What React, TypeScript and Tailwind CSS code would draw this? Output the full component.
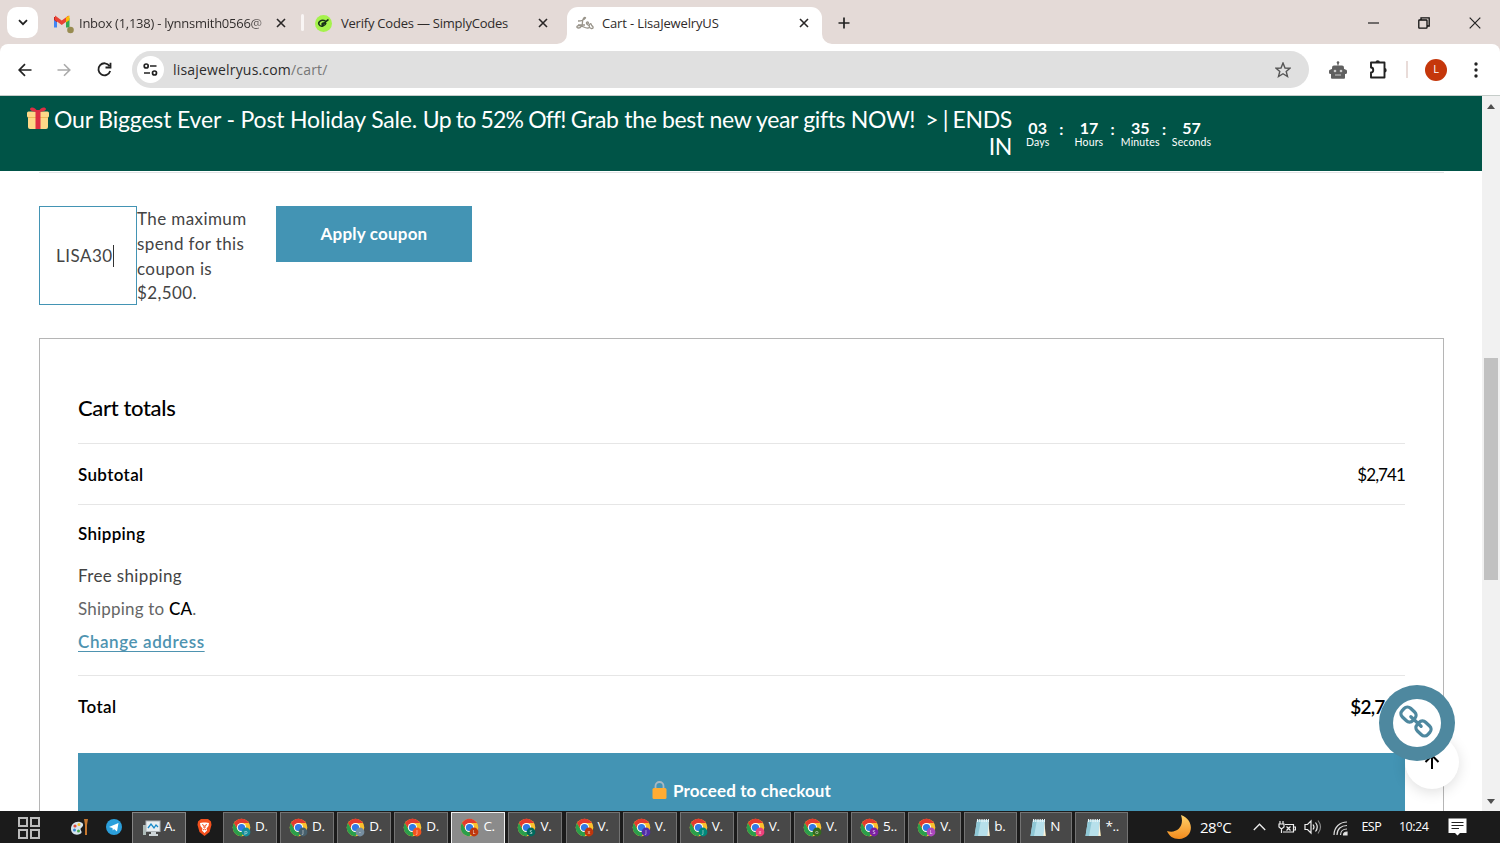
import type { ReactNode } from 'react';
import clsx from 'clsx';

type Task = { label: string; kind: 'chrome' | 'note'; badge?: string; letter?: string; active?: boolean; width: string };

const tasks: Task[] = [
    { label: 'D.', kind: 'chrome', badge: '#148c99', letter: 'p', width: 'w-[54px]' },
    { label: 'D.', kind: 'chrome', badge: '#47606d', letter: 'J', width: 'w-[54px]' },
    { label: 'D.', kind: 'chrome', badge: '#758da0', letter: '-', width: 'w-[54px]' },
    { label: 'D.', kind: 'chrome', badge: '#f4511e', letter: 'J', width: 'w-[54px]' },
    { label: 'C.', kind: 'chrome', badge: '#bf360c', letter: 'L', active: true, width: 'w-[54px]' },
    { label: 'V.', kind: 'chrome', badge: '#00695c', letter: 'S', width: 'w-[54px]' },
    { label: 'V.', kind: 'chrome', badge: '#bf360c', letter: 'x', width: 'w-[54px]' },
    { label: 'V.', kind: 'chrome', badge: '#512da8', letter: 'J', width: 'w-[54px]' },
    { label: 'V.', kind: 'chrome', badge: '#00897b', letter: 'J', width: 'w-[54px]' },
    { label: 'V.', kind: 'chrome', badge: '#ec407a', letter: 'x', width: 'w-[54px]' },
    { label: 'V.', kind: 'chrome', badge: '#33691e', letter: 'o', width: 'w-[54px]' },
    { label: '5..', kind: 'chrome', badge: '#7b1fa2', letter: 'S', width: 'w-[54px]' },
    { label: 'V.', kind: 'chrome', badge: '#ab47bc', letter: 'L', width: 'w-[53px]' },
    { label: 'b.', kind: 'note', width: 'w-[53px]' },
    { label: 'N', kind: 'note', width: 'w-[52px]' },
    { label: '*..', kind: 'note', width: 'w-[53px]' },
];

const countdown = [
    { value: '03', unit: 'Days' },
    { value: '17', unit: 'Hours' },
    { value: '35', unit: 'Minutes' },
    { value: '57', unit: 'Seconds' },
];

function ChromeIcon({ badge, letter }: { badge?: string; letter?: string }) {
    return (
        <svg width="20" height="20" viewBox="0 0 20 20" className="shrink-0">
            <circle cx="9.500" cy="9.5" r="8.8" fill="#fbc02d" />
            <path d="M1.9 5.1A8.8 8.8 0 0 1 17.1 5.1H9.5A4.4 4.4 0 0 0 5.7 11.7Z" fill="#e33b2e" />
            <path d="M1.9 5.1L5.7 11.7A4.4 4.4 0 0 0 13.3 11.7L9.5 18.3A8.8 8.8 0 0 1 1.9 5.1Z" fill="#2b9e4b" />
            <circle cx="9.5" cy="9.5" r="4.6" fill="#fff" />
            <circle cx="9.5" cy="9.5" r="3.6" fill="#3079e6" />
            <circle cx="14" cy="14" r="4.400" fill={badge} />
            <text x="14" y="16" fontSize="5.5" fill="#fff" textAnchor="middle" fontFamily="Open Sans" opacity=".8">{letter}</text>
        </svg>
    );
}

function NoteIcon() {
    return (
        <svg width="18" height="20" viewBox="0 0 18 20" className="shrink-0">
            <path d="M15 3L17 18H4Z" fill="#e8d9ab" />
            <path d="M4 2H16L14.5 18H1.5Z" fill="#b7e0eb" />
            <path d="M4 2H8L5 18H1.5Z" fill="#8fc7d5" />
            <path d="M14.5 18L16 2V17.5Z" fill="#f7f4e6" />
            <path d="M4 2.5H16" stroke="#e8f5f8" strokeWidth="3" strokeDasharray="1.2 1" />
        </svg>
    );
}

function CloseIcon() {
    return (
        <svg width="10" height="10" viewBox="0 0 10 10" className="shrink-0">
            <path d="M1 1L9 9M9 1L1 9" stroke="#2a2727" strokeWidth="1.6" />
        </svg>
    );
}

function TabStrip() {
    return (
        <div className="flex h-11 items-stretch bg-[#e4dad7] text-[13px] text-[#2f2b2a]">
            <div className="ml-[7px] mt-[7px] flex size-[31px] shrink-0 items-center justify-center rounded-[10px] bg-white">
                <svg width="10" height="7" viewBox="0 0 10 7"><path d="M1 1.2L5 5.2L9 1.2" fill="none" stroke="#222" strokeWidth="1.8" /></svg>
            </div>
            <div className="ml-[15px] flex h-[46px] w-[248px] items-center">
                <svg width="22" height="20" viewBox="0 0 22 20" className="mt-0.5 shrink-0">
                    <path d="M1 4V13.5H4V7Z" fill="#4285f4" />
                    <path d="M13 7V13.5H16.500V4Z" fill="#34a853" />
                    <path d="M1 3V6L4 8.300V3Z" fill="#c5221f" />
                    <path d="M2 1.500L8.750 6.500L15.500 1.500V6L8.750 11L2 6Z" fill="#ea4335" />
                    <path d="M13 3.500L16.500 1.500V6L13 8.500Z" fill="#fbbc04" />
                    <circle cx="17.500" cy="16" r="3.300" fill="#988c51" />
                </svg>
                <span className="ml-[4px] mt-px w-[189px] overflow-hidden whitespace-nowrap bg-gradient-to-r from-[#2f2b2a] from-90% to-[#2f2b2a]/30 bg-clip-text tracking-[-0.25px] text-transparent">Inbox (1,138) - lynnsmith0566@</span>
                <span className="ml-[8px]"><CloseIcon /></span>
            </div>
            <div className="mt-[14px] h-[17px] w-[3px] rounded bg-[#f9f5f4]" />
            <div className="ml-[11px] flex h-[46px] w-[242px] items-center">
                <svg width="17" height="17" viewBox="0 0 17 17" className="shrink-0">
                    <circle cx="8.500" cy="8.500" r="8.500" fill="#a5f24c" />
                    <path d="M10.500 6C6 4 2.800 7 4 9.500C5.500 12.500 10.500 11 11 8M11 8C8 7.500 6.500 8.500 7.200 9.700C9 10 10 6.500 13.500 4.500" fill="none" stroke="#183018" strokeWidth="1.500" />
                </svg>
                <span className="ml-[9px] mt-px w-[197px] whitespace-nowrap tracking-[-0.22px]">Verify Codes — SimplyCodes</span>
                <span><CloseIcon /></span>
            </div>
            <div className="relative ml-[10px] mt-[7px] flex w-[255px] rounded-t-[11px] bg-white">
                <svg width="10" height="10" viewBox="0 0 10 10" className="absolute bottom-0 -left-[10px]"><path d="M10 0V10H0A10 10 0 0 0 10 0Z" fill="#fff" /></svg>
                <svg width="10" height="10" viewBox="0 0 10 10" className="absolute bottom-0 -right-[10px]"><path d="M0 0V10H10A10 10 0 0 1 0 0Z" fill="#fff" /></svg>
                <div className="ml-[9px] flex h-8 items-center">
                    <svg width="18" height="14" viewBox="0 0 18 14" fill="none" stroke="#99948a" strokeWidth="1.300">
                        <path d="M2 5C5 5 8 4 9.500 1.800C9 .5 6.500 2 6.500 6C6.500 9 5 12 2.500 12C0 12 .5 9.500 3 9.500C6 9.500 9 12.500 12 12C14 12 14 10 12 9C10 8 10 6 11.500 6C13 6 12.500 8 11 8.500M13 10C14 7 15 7 15.500 9C16 10.500 17.500 10 17 12C16 13 14.500 12.500 14 11.500M2 9H9" />
                    </svg>
                    <span className="ml-[8px] mt-px w-[197px] whitespace-nowrap tracking-[-0.15px]">Cart - LisaJewelryUS</span>
                    <CloseIcon />
                </div>
            </div>
            <svg width="12" height="12" viewBox="0 0 12 12" className="ml-[16px] mt-[17px]"><path d="M6 .5V11.500M.5 6H11.500" stroke="#222" strokeWidth="1.700" /></svg>
            <div className="ml-auto flex h-[45px] items-center gap-[39px] pr-[19px]">
                <svg width="11" height="11" viewBox="0 0 11 11"><path d="M0 6H11" stroke="#222" strokeWidth="1.200" /></svg>
                <svg width="12" height="12" viewBox="0 0 12 12" fill="none" stroke="#111" strokeWidth="1.300"><rect x=".8" y="3" width="8.200" height="8.200" rx=".6" /><path d="M3 3V.8H11.200V9H9" /></svg>
                <svg width="12" height="12" viewBox="0 0 12 12"><path d="M.7.7L11.300 11.300M11.300.7L.7 11.300" stroke="#222" strokeWidth="1.200" /></svg>
            </div>
        </div>
    );
}

function Toolbar() {
    return (
        <div className="bg-[#e4dad7]">
            <div className="flex h-[52px] items-center rounded-t-[8px] border-b border-[#c6cdca] bg-white">
                <svg width="14" height="14" viewBox="0 0 14 14" className="ml-[18px]" fill="none" stroke="#222" strokeWidth="1.700"><path d="M13.500 7H1.500M7 1.200L1.200 7L7 12.800" /></svg>
                <svg width="14" height="14" viewBox="0 0 14 14" className="ml-[25px]" fill="none" stroke="#aaa" strokeWidth="1.600"><path d="M.5 7H12.500M7 1.200L12.800 7L7 12.800" /></svg>
                <svg width="15" height="15" viewBox="0 0 15 15" className="ml-[25.500px]" fill="none" stroke="#222" strokeWidth="1.800"><path d="M12.500 4A6 6 0 1 0 13.200 9M13.500.8V5.500H8.500" /></svg>
                <div className="ml-[20.500px] flex h-[37px] w-[1177px] shrink-0 items-center rounded-full bg-[#e0e0e0] pl-[5px] pr-[18px]">
                    <div className="flex size-[27px] items-center justify-center rounded-full bg-white">
                        <svg width="15" height="13" viewBox="0 0 15 13" fill="none" stroke="#222" strokeWidth="1.700"><circle cx="3.200" cy="3" r="2" /><path d="M7 3H13.500M1 10H7" /><circle cx="11.500" cy="10" r="2" /></svg>
                    </div>
                    <span className="ml-[9px] text-[14px] tracking-[0.18px] text-[#2c2c2c]">lisajewelryus.com<span className="text-[#777]">/cart/</span></span>
                    <svg width="16" height="16" viewBox="0 0 16 16" className="ml-auto" fill="none" stroke="#555" strokeWidth="1.400"><path d="M8 1L10 6L15 6.200L11.200 9.500L12.500 14.500L8 11.700L3.500 14.500L4.800 9.500L1 6.200L6 6Z" /></svg>
                </div>
                <svg width="18" height="18" viewBox="0 0 18 18" className="ml-5" fill="#606060">
                    <circle cx="9" cy="1.600" r="1.300" />
                    <path d="M8.400 2H9.600V4.500H8.400Z" />
                    <rect x="3" y="4.500" width="12" height="6" rx="2" />
                    <rect x="0" y="8.500" width="18" height="4.500" rx="1.500" />
                    <rect x="2" y="8" width="14" height="9.800" rx="1" />
                    <circle cx="6" cy="10" r="1.300" fill="#ccc" />
                    <circle cx="12" cy="10" r="1.300" fill="#ccc" />
                    <path d="M6 14H12" stroke="#ccc" />
                </svg>
                <svg width="19" height="19" viewBox="0 0 19 19" className="ml-[22px]">
                    <path d="M2 2.500H15.500V17.500H2V12.500C5 12.500 5 7.500 2 7.500Z" fill="none" stroke="#222" strokeWidth="1.900" strokeLinejoin="round" />
                    <path d="M6.500 2.500A2.200 2.200 0 0 1 10.900 2.500ZM15.500 8A2.200 2.200 0 0 1 15.500 12.400Z" fill="#222" />
                </svg>
                <div className="ml-[18px] h-[17px] w-[2px] bg-[#e9dcd9]" />
                <div className="ml-[17px] flex size-[22px] items-center justify-center rounded-full bg-[#c5370b] text-[11px] text-white">L</div>
                <svg width="4" height="16" viewBox="0 0 4 16" className="ml-[27px]" fill="#222"><circle cx="2" cy="2" r="1.700" /><circle cx="2" cy="8" r="1.700" /><circle cx="2" cy="14" r="1.700" /></svg>
            </div>
        </div>
    );
}

function Banner() {
    return (
        <div className="flex h-[75px] shrink-0 bg-[#005447] text-white">
            <div className="ml-[26px] mt-[10px] w-[986px] whitespace-nowrap text-right text-[23px] leading-[26px] tracking-[-0.33px]">
                <div className="flex items-center justify-between">
                    <svg width="24" height="24" viewBox="0 0 24 24" className="shrink-0">
                        <path d="M2 9H22V20Q22 22 20 22H4Q2 22 2 20Z" fill="#fdd888" />
                        <rect x="1" y="4.500" width="22" height="6" rx="1.500" fill="#fdd888" />
                        <path d="M2 10.500H22" stroke="#eeb85b" />
                        <path d="M9.500 3H14.500V22H9.500Z" fill="#dd2e44" />
                        <path d="M12 5C8 5 4 4 4 2C5-.5 9 0 12 5C15 0 19-.5 20 2C20 4 16 5 12 5Z" fill="#dd2e44" />
                    </svg>
                    <span>
                        <span className="tracking-[-0.16px]">Our Biggest Ever - Post Holiday Sale. </span>
                        <span className="tracking-[-0.8px]">Up to 52% Off! </span>
                        Grab the best new year gifts NOW!<span className="tracking-[-0.9px]"> &nbsp;&gt; | </span>ENDS
                    </span>
                </div>
                <div className="mt-px">IN</div>
            </div>
            <div className="mt-[22px] flex">
                {countdown.map((c, i) => (
                    <div key={c.unit} className="flex">
                        {i > 0 && <span className="w-0 -translate-x-[4px] text-[16px] font-bold leading-[22px]">:</span>}
                        <div className="flex w-[51.300px] flex-col items-center">
                            <span className="text-[16px] font-bold leading-[20px]">{c.value}</span>
                            <span className="-mt-[2px] text-[10.500px] leading-[12px] tracking-[0.15px]">{c.unit}</span>
                        </div>
                    </div>
                ))}
            </div>
        </div>
    );
}

function Row({ children, className }: { children: ReactNode; className: string }) {
    return <div className={clsx('flex items-center justify-between border-t border-[#e6e6e6]', className)}>{children}</div>;
}

function CartTotals() {
    return (
        <div className="mx-[39px] mr-[38px] mt-[32px] h-[480px] shrink-0 border border-[#b5b5b5] px-[38px] text-[17px] text-black">
            <h2 className="flex h-[104px] items-end pb-[21px] text-[22px] font-medium leading-[28px] tracking-[-0.35px]">Cart totals</h2>
            <Row className="h-[61px] pt-[2px]">
                <span className="font-semibold tracking-[0.35px]">Subtotal</span>
                <span className="tracking-[-0.9px]">$2,741</span>
            </Row>
            <div className="h-[171px] border-t border-[#e6e6e6] pt-[16px]">
                <div className="font-semibold leading-[26px] tracking-[0.3px]">Shipping</div>
                <div className="mt-[12px] leading-[33px] tracking-[0.35px] text-[#444]">
                    <div>Free shipping</div>
                    <div className="tracking-[0.2px] text-[#666]">Shipping to <span className="font-medium text-black">CA</span>.</div>
                    <div><span className="font-semibold tracking-[0.58px] text-[#4e93b0] underline underline-offset-3">Change address</span></div>
                </div>
            </div>
            <Row className="h-[78px] pb-[15px]">
                <span className="font-semibold tracking-[0.4px]">Total</span>
                <span className="text-[19px] font-semibold tracking-[-0.8px]">$2,741</span>
            </Row>
            <button className="flex h-[76px] w-full items-center justify-center gap-[6px] bg-[#4394b4] pb-px font-bold tracking-[0.12px] text-white">
                <svg width="15" height="19" viewBox="0 0 15 19"><path d="M3.500 8V5A4 4 0 0 1 11.500 5V8" fill="none" stroke="#aab8c2" strokeWidth="1.800" /><rect x=".5" y="7" width="14" height="11" rx="1.500" fill="#ffac33" /></svg>
                Proceed to checkout
            </button>
        </div>
    );
}

function FloatingButtons() {
    return (
        <>
            <div className="absolute left-[1405px] top-[639px] flex size-[54px] items-center justify-center rounded-full bg-white shadow-[0_3px_14px_rgba(0,0,0,0.13)]">
                <svg width="16" height="18" viewBox="0 0 16 18" fill="none" stroke="#000" strokeWidth="2"><path d="M8 16V3M1.500 9L8 2.500L14.500 9" /></svg>
            </div>
            <div className="absolute left-[1379px] top-[589px] flex size-[76px] items-center justify-center rounded-full bg-[#4e889f]">
                <div className="flex size-12 items-center justify-center rounded-full bg-white">
                    <svg width="36" height="36" viewBox="-18 -18 36 36" fill="none" stroke="#4e889f" strokeWidth="3.300">
                        <g transform="translate(-1 -1.500) rotate(43)">
                            <rect x="-17.500" y="-6" width="14.500" height="12" rx="4.500" />
                            <rect x="3" y="-6" width="14.500" height="12" rx="4.500" />
                            <path d="M-7 0H7" strokeLinecap="round" />
                        </g>
                    </svg>
                </div>
            </div>
        </>
    );
}

function Scrollbar() {
    return (
        <div className="flex w-[18px] shrink-0 flex-col items-center bg-[#f1f1f1]">
            <svg width="8" height="5" viewBox="0 0 8 5" className="mt-[8px]"><path d="M0 5L4 0L8 5Z" fill="#505050" /></svg>
            <div className="mt-[249px] h-[222px] w-[14px] bg-[#c1c1c1]" />
            <svg width="8" height="5" viewBox="0 0 8 5" className="mb-[7px] mt-auto"><path d="M0 0L4 5L8 0Z" fill="#505050" /></svg>
        </div>
    );
}

function Taskbar() {
    return (
        <div className="flex h-8 items-center bg-[#1b1b1b] text-[14px] text-white">
            <svg width="22" height="22" viewBox="0 0 22 22" className="ml-[18px] mt-[2px] shrink-0" fill="none" stroke="#bcbcbc" strokeWidth="2"><path d="M1 1H9V9H1ZM13 1H21V9H13ZM1 13H9V21H1ZM13 13H21V21H13Z" /></svg>
            <svg width="18" height="18" viewBox="0 0 18 18" className="ml-[31px] shrink-0">
                <path d="M0 11C0 6 4 3 9 4C13 5 13 8 10 10C8 12 13 14 9 16C4 18 0 15 0 11Z" fill="#d7e5ee" />
                <circle cx="4" cy="8" r="1.600" fill="#e24b3b" /><circle cx="8" cy="6.500" r="1.500" fill="#f4bf32" /><circle cx="3.500" cy="12" r="1.500" fill="#3b88d3" /><circle cx="7.500" cy="13" r="1.500" fill="#48a84b" />
                <path d="M13 1H17L16 7V17H14V7Z" fill="#c8782f" />
            </svg>
            <svg width="16" height="16" viewBox="0 0 16 16" className="ml-[17px] shrink-0"><circle cx="8" cy="8" r="8" fill="#2b9fdb" /><path d="M3 8L12.500 4L11 12.500L8 10L6.800 11.500L6.500 9Z" fill="#fff" /></svg>
            <div className="ml-[10px] mt-px flex h-[31px] w-[54px] shrink-0 items-center border border-b-0 border-[#858585] bg-[#484848] pl-[9px]">
                <svg width="19" height="17" viewBox="0 0 19 17" className="shrink-0"><path d="M1 5H4V15H1Z" fill="#aebbb8" /><rect x="4" y="1" width="14" height="10.500" fill="#e9eef1" stroke="#aeb4b8" /><path d="M6 8L9 4L12 8L14 5L16 7" stroke="#1688c7" fill="none" strokeWidth="1.300" /><path d="M9 12H14V14H16V16H7V14H9Z" fill="#ccd4d7" /></svg>
                <span className="-mt-[3px] ml-[3px] text-[13.500px] tracking-[-0.3px]">A.</span>
            </div>
            <svg width="15" height="17" viewBox="0 0 15 17" className="ml-[11px] shrink-0"><path d="M4 0H11L14 2.500L14.500 6L12.500 13L7.500 17L2.500 13L.5 6L1 2.500Z" fill="#f4511e" /><path d="M3 4L6 3.500H9L12 4L11.500 7L9.500 9.500L10 11.500L7.500 14L5 11.500L5.500 9.500L3.500 7Z" fill="#fff" /><path d="M5 5.500L7 6.500V9M10 5.500L8 6.500V9M6 11L7.500 10L9 11" stroke="#f4511e" fill="none" /></svg>
            <div className="ml-[11px] mt-px flex shrink-0 gap-[3.100px]">
                {tasks.map((t, i) => (
                    <div key={i} className={clsx('flex h-[31px] shrink-0 items-center border border-b-0 pl-[8px]', t.width, t.active ? 'border-[#eee] bg-[#8b8b8b]' : 'border-[#737373] bg-[#484848]')}>
                        {t.kind === 'chrome' ? <ChromeIcon badge={t.badge} letter={t.letter} /> : <NoteIcon />}
                        <span className="-mt-[3px] ml-[3px] text-[13.500px] tracking-[-0.3px]">{t.label}</span>
                    </div>
                ))}
            </div>
            <svg width="26" height="26" viewBox="0 0 26 26" className="ml-[37.500px] shrink-0"><defs><linearGradient id="moon" x2="0" y2="1"><stop stopColor="#ffd36b" /><stop offset="1" stopColor="#f38a1c" /></linearGradient></defs><path d="M15 1C29 6 28 24 13 25C7 25 3 22 1 17C10 20 19 13 15 1Z" fill="url(#moon)" /></svg>
            <span className="ml-[8px] w-[34px] whitespace-nowrap text-[15px] tracking-[-0.4px]">28°C</span>
            <svg width="13" height="8" viewBox="0 0 13 8" className="ml-[19.500px] shrink-0" fill="none" stroke="#eee" strokeWidth="1.300"><path d="M.8 7L6.500 1.200L12.200 7" /></svg>
            <svg width="18" height="13" viewBox="0 0 18 13" className="ml-[11.500px] shrink-0" fill="none" stroke="#eee" strokeWidth="1.200"><path d="M1 3H6V6L3.500 8L1 6ZM2 0V3M5 0V3M3.500 8V12M7 3.500H15.500V11H5M16 6H17.500V9H16M8.500 5.500L12.500 9.500M12.500 5.500L8.500 9.500" /></svg>
            <svg width="18" height="16" viewBox="0 0 18 16" className="ml-[8px] shrink-0" fill="none" stroke="#eee" strokeWidth="1.200"><path d="M1 5.500H3.500L7 2V14L3.500 10.500H1ZM9 5.500Q11 8 9 10.500M11.500 3.500Q15 8 11.500 12.500" /><path d="M14 1.500Q19 8 14 14.500" stroke="#888" /></svg>
            <svg width="16" height="15" viewBox="0 0 16 15" className="ml-[11px] mt-[3px] shrink-0" fill="none" stroke="#ddd" strokeWidth="1.200"><path d="M1 14C1 6 7 1 14 1M4 14C4 8 8 4.500 14 4.500M7.500 14C7.500 10.500 10 8 14 8" /><path d="M10.500 14C10.500 12 12 11 14 11V14Z" fill="#eee" /></svg>
            <span className="ml-[12.500px] w-[22px] whitespace-nowrap text-[12.500px] tracking-[-0.5px]">ESP</span>
            <span className="ml-[15.500px] w-[30px] whitespace-nowrap text-[12.500px] tracking-[-0.5px]">10:24</span>
            <svg width="19" height="18" viewBox="0 0 19 18" className="ml-[19px] shrink-0"><path d="M.5.5H18.500V15H12L9.500 17.500L7 15H.5Z" fill="#fff" /><path d="M3.500 4.500H15.500M3.500 7.500H15.500M3.500 10.500H11" stroke="#222" strokeWidth="1.200" /></svg>
        </div>
    );
}

export default function App() {
    return (
        <div className="flex h-[843px] w-[1500px] flex-col overflow-hidden bg-white font-['Open_Sans','Noto_Sans',sans-serif]">
            <TabStrip />
            <Toolbar />
            <div className="relative flex h-[715px] overflow-hidden font-['Lato',sans-serif]">
                <main className="flex w-[1482px] shrink-0 flex-col">
                    <Banner />
                    <div className="ml-[39px] mr-[38px] mt-px h-px shrink-0 bg-[#e3e3e6]" />
                    <div className="ml-[39px] mt-[33px] flex shrink-0 items-start text-[17px] text-[#444]">
                        <div className="flex h-[99px] w-[98px] items-center border border-[#4394b4] pl-4">
                            <span className="text-[17px] tracking-[0.5px]">LISA30</span>
                            <span className="h-[22px] w-px bg-[#333]" />
                        </div>
                        <p className="w-[139px] whitespace-nowrap pt-px leading-[24.800px] tracking-[0.4px]">The maximum<br />spend for this<br />coupon is<br />$2,500.</p>
                        <button className="h-14 w-[196px] bg-[#4394b4] font-bold tracking-[0.2px] text-white">Apply coupon</button>
                    </div>
                    <CartTotals />
                </main>
                <Scrollbar />
                <FloatingButtons />
            </div>
            <Taskbar />
        </div>
    );
}
